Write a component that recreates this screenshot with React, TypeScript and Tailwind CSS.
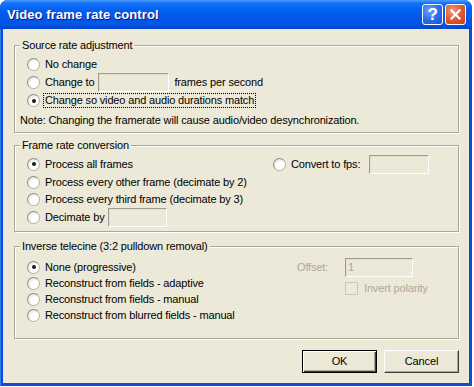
import { clsx } from 'clsx'

const FONT = "font-['Liberation_Sans',Arial,sans-serif] text-[11px] tracking-[-0.15px]"

function Radio({ checked, disabled }: { checked?: boolean; disabled?: boolean }) {
  return (
    <span
      className={clsx(
        'relative inline-flex w-[13px] h-[13px] shrink-0 items-center justify-center rounded-full border border-[#b4b3aa] border-t-[#8e8f8f] border-l-[#8e8f8f]',
        'bg-[radial-gradient(circle_at_65%_65%,#ffffff_0%,#ffffff_40%,#d6d4ca_100%)]',
        disabled && 'opacity-60'
      )}
    >
      {checked && <span className="w-[4px] h-[4px] rounded-full bg-[#1b1b1b]" />}
    </span>
  )
}

function Field({ w, value, disabled }: { w: string; value?: string; disabled?: boolean }) {
  return (
    <div
      className={clsx(
        w,
        'h-[19px] border border-t-[#9d9d98] border-l-[#9d9d98] border-r-white border-b-white bg-[#ece9d8] shadow-[inset_1px_1px_0_#e0ddcc] px-[2px] leading-[17px]',
        disabled ? 'text-[#aca899]' : 'text-black'
      )}
    >
      {value}
    </div>
  )
}

function Group({ title, h, children }: { title: string; h: string; children: React.ReactNode }) {
  return (
    <div
      className={clsx(
        'relative w-[445px] border border-[#aca899] shadow-[inset_1px_1px_0_#fff,1px_1px_0_#fff]',
        h
      )}
    >
      <span className="absolute -top-[8px] left-[5px] bg-[#ece9d8] px-[2px] leading-[14px]">{title}</span>
      {children}
    </div>
  )
}

function Row({ h, label, checked, children }: { h: string; label: string; checked?: boolean; children?: React.ReactNode }) {
  return (
    <div className={clsx('flex items-center', h)}>
      <Radio checked={checked} />
      <span className="ml-[5px] whitespace-nowrap">{label}</span>
      {children}
    </div>
  )
}

export default function App() {
  return (
    <div className={clsx('w-[474px] h-[387px] bg-white', FONT)}>
      <div className="w-[472px] h-[386px] flex flex-col rounded-t-[8px] bg-[#0a4ddb] shadow-[inset_1px_0_0_#3a7bf0]">
        {/* title bar */}
        <div className="h-[29px] shrink-0 flex items-center rounded-t-[8px] bg-[linear-gradient(180deg,#4a9bff_0%,#1270f8_12%,#0460f0_35%,#0058ea_60%,#0254e4_85%,#0044cc_100%)] pl-[7px] pr-[6px]">
          <span className="flex-1 font-['Liberation_Sans',Arial,sans-serif] font-bold text-[13px] text-white [text-shadow:1px_1px_0_#0a1883] tracking-[0.1px]">
            Video frame rate control
          </span>
          <div className="w-[21px] h-[21px] rounded-[3px] border border-white bg-[radial-gradient(circle_at_35%_30%,#6fa3ff_0%,#2f6cf0_50%,#1b4fd6_100%)] flex items-center justify-center text-white font-bold text-[17px] leading-none font-['Liberation_Sans',Arial,sans-serif]">
            ?
          </div>
          <div className="ml-[2px] w-[21px] h-[21px] rounded-[3px] border border-white bg-[radial-gradient(circle_at_35%_30%,#f09a7a_0%,#e25a30_50%,#c83c14_100%)] flex items-center justify-center">
            <svg width="11" height="11" viewBox="0 0 11 11">
              <path d="M1.5 1.5 L9.5 9.5 M9.5 1.5 L1.5 9.5" stroke="white" strokeWidth="2.2" strokeLinecap="square" />
            </svg>
          </div>
        </div>

        {/* body */}
        <div className="flex-1 mx-[3px] mb-[3px] bg-[#ece9d8] pl-[11px] pt-[16px] flex flex-col text-black">
          <Group title="Source rate adjustment" h="h-[88px]">
            <div className="pl-[12px] pt-[9px] flex flex-col">
              <Row h="h-[18px]" label="No change" />
              <Row h="h-[18px]" label="Change to">
                <div className="ml-[4px]">
                  <Field w="w-[71px]" />
                </div>
                <span className="ml-[5px]">frames per second</span>
              </Row>
              <div className="flex items-center h-[19px]">
                <Radio checked />
                <span className="ml-[3px] px-[1px] border border-dotted border-black leading-[13px] whitespace-nowrap">
                  Change so video and audio durations match
                </span>
              </div>
              <div className="h-[20px] -ml-[7px] flex items-center">
                Note: Changing the framerate will cause audio/video desynchronization.
              </div>
            </div>
          </Group>

          <div className="mt-[12px]">
            <Group title="Frame rate conversion" h="h-[87px]">
              <div className="flex pl-[12px] pt-[9px]">
                <div className="w-[246px] flex flex-col">
                  <Row h="h-[18px]" label="Process all frames" checked />
                  <Row h="h-[18px]" label="Process every other frame (decimate by 2)" />
                  <Row h="h-[17px]" label="Process every third frame (decimate by 3)" />
                  <Row h="h-[19px]" label="Decimate by">
                    <div className="ml-[4px]">
                      <Field w="w-[59px]" />
                    </div>
                  </Row>
                </div>
                <div className="flex items-center h-[21px] -mt-[1px]">
                  <Radio />
                  <span className="ml-[5px]">Convert to fps:</span>
                  <div className="ml-[9px]">
                    <Field w="w-[60px]" />
                  </div>
                </div>
              </div>
            </Group>
          </div>

          <div className="mt-[14px]">
            <Group title="Inverse telecine (3:2 pulldown removal)" h="h-[93px]">
              <div className="flex pl-[12px] pt-[12px]">
                <div className="w-[270px] flex flex-col">
                  <Row h="h-[16px]" label="None (progressive)" checked />
                  <Row h="h-[16px]" label="Reconstruct from fields - adaptive" />
                  <Row h="h-[16px]" label="Reconstruct from fields - manual" />
                  <Row h="h-[16px]" label="Reconstruct from blurred fields - manual" />
                </div>
                <div className="flex flex-col -mt-[2px]">
                  <div className="flex items-center h-[20px]">
                    <span className="w-[48px] text-[#aca899]">Offset:</span>
                    <Field w="w-[68px]" value="1" disabled />
                  </div>
                  <div className="flex items-center h-[22px] pl-[48px]">
                    <span className="w-[13px] h-[13px] border border-[#cac8bb] bg-[#ece9d8]" />
                    <span className="ml-[6px] text-[#aca899]">Invert polarity</span>
                  </div>
                </div>
              </div>
            </Group>
          </div>

          <div className="mt-[11px] flex justify-end gap-[7px] pr-[10px]">
            <button className="w-[75px] h-[23px] border border-black bg-[#ece9d8] shadow-[inset_1px_1px_0_#fff,inset_-1px_-1px_0_#404040,inset_-2px_-2px_0_#aca899] text-black">
              OK
            </button>
            <button className="w-[75px] h-[23px] border border-t-white border-l-white border-r-[#404040] border-b-[#404040] bg-[#ece9d8] shadow-[inset_-1px_-1px_0_#aca899] text-black">
              Cancel
            </button>
          </div>
        </div>
      </div>
    </div>
  )
}
